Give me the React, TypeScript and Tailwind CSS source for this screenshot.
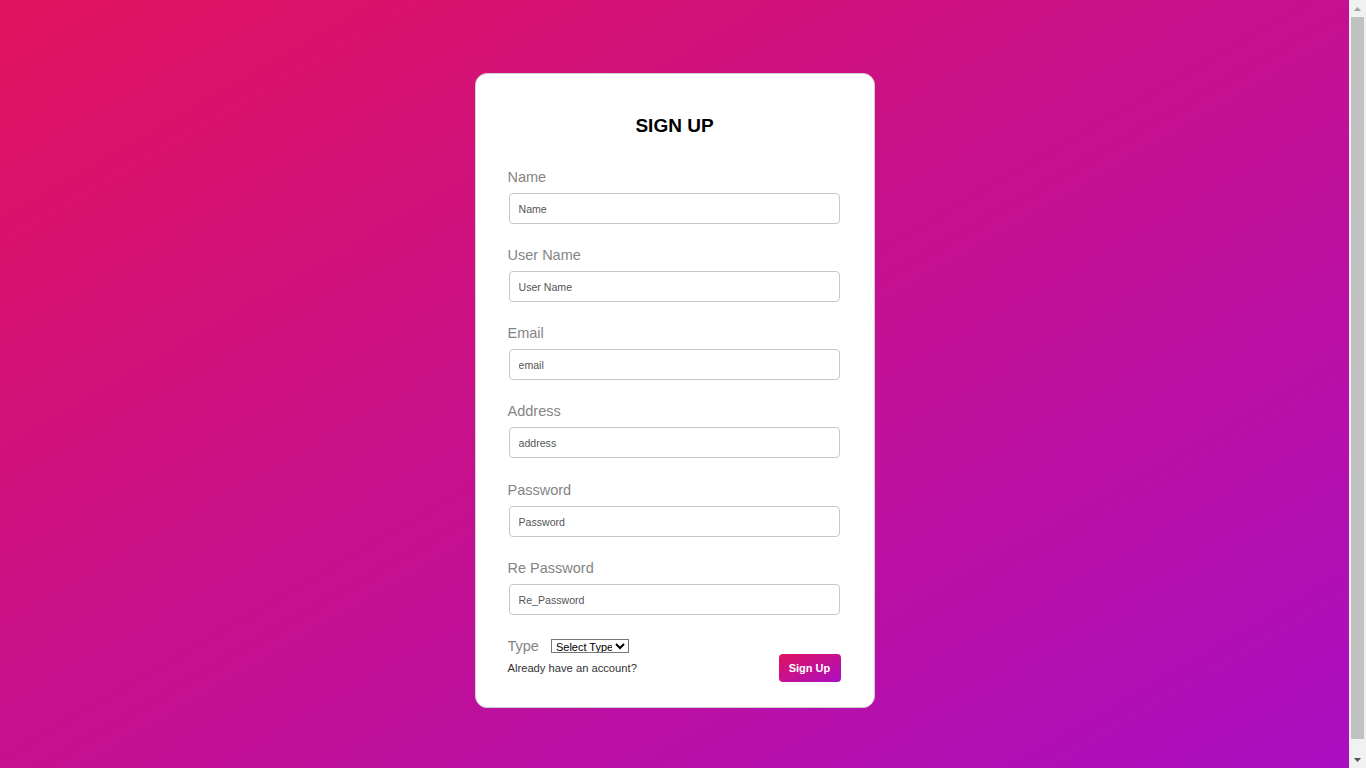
import React from "react";

const fields = [
  { label: "Name", ph: "Name" },
  { label: "User Name", ph: "User Name" },
  { label: "Email", ph: "email" },
  { label: "Address", ph: "address" },
  { label: "Password", ph: "Password" },
  { label: "Re Password", ph: "Re_Password" },
];

export default function App() {
  return (
    <div className="flex w-full" style={{ fontFamily: '"Liberation Sans", Arial, sans-serif' }}>
      <div className="min-h-[781px] w-[1349px] bg-[linear-gradient(to_bottom_right,#e1135e,#a90ec2)] py-[73px] flex justify-center">
        <div className="w-[400px] h-[635px] bg-white rounded-[12px] border border-[#cfcfcf] pl-[32px] pr-[33px] pt-[40px] pb-[25px] flex flex-col">
          <h2 className="text-center text-[19px] leading-[23px] font-bold text-black mb-[31px] pl-px">SIGN UP</h2>
          {fields.map((f, i) => (
            <div key={f.label} className="flex flex-col mb-[22px]">
              <label className={`text-[14.5px] leading-[19px] text-[#858585] mb-[6px] ${i === 4 ? "pt-px" : ""}`}>{f.label}</label>
              <input
                type="text"
                placeholder={f.ph}
                className="ml-px w-[331px] h-[31px] border border-[#c8c8c8] rounded-[4px] px-[9px] text-[10.6px] text-[#555] placeholder:text-[#555] outline-none"
              />
            </div>
          ))}
          <div className="flex items-center h-[16px] mt-px">
            <span className="text-[14.5px] leading-[16px] text-[#858585]">Type</span>
            <select className="ml-[12px] h-[14px] w-[78px] py-0 pl-0 border border-[#767676] text-[11px] leading-[12px] text-black bg-white">
              <option>Select Type</option>
              <option>Customer</option>
              <option>Seller</option>
            </select>
          </div>
          <div className="flex items-center justify-between h-[28px]">
            <span className="text-[11.2px] text-[#333]">Already have an account?</span>
            <button className="w-[62px] h-[28px] rounded-[4px] bg-[linear-gradient(to_bottom_right,#e1135e,#a90ec2)] text-white text-[11px] font-bold">
              Sign Up
            </button>
          </div>
        </div>
      </div>
      <div className="fixed right-0 top-0 h-screen w-[17px] bg-[#f1f1f1] flex flex-col items-center">
        <div className="h-[17px] w-full flex items-center justify-center">
          <svg width="7" height="4" viewBox="0 0 7 4"><path d="M0 4 L3.5 0 L7 4 Z" fill="#a3a3a3" /></svg>
        </div>
        <div className="flex-1 w-full px-[2px] pb-[12px]">
          <div className="h-full w-full bg-[#c1c1c1]" />
        </div>
        <div className="h-[17px] w-full flex items-center justify-center">
          <svg width="7" height="4" viewBox="0 0 7 4"><path d="M0 0 L7 0 L3.5 4 Z" fill="#505050" /></svg>
        </div>
      </div>
    </div>
  );
}
